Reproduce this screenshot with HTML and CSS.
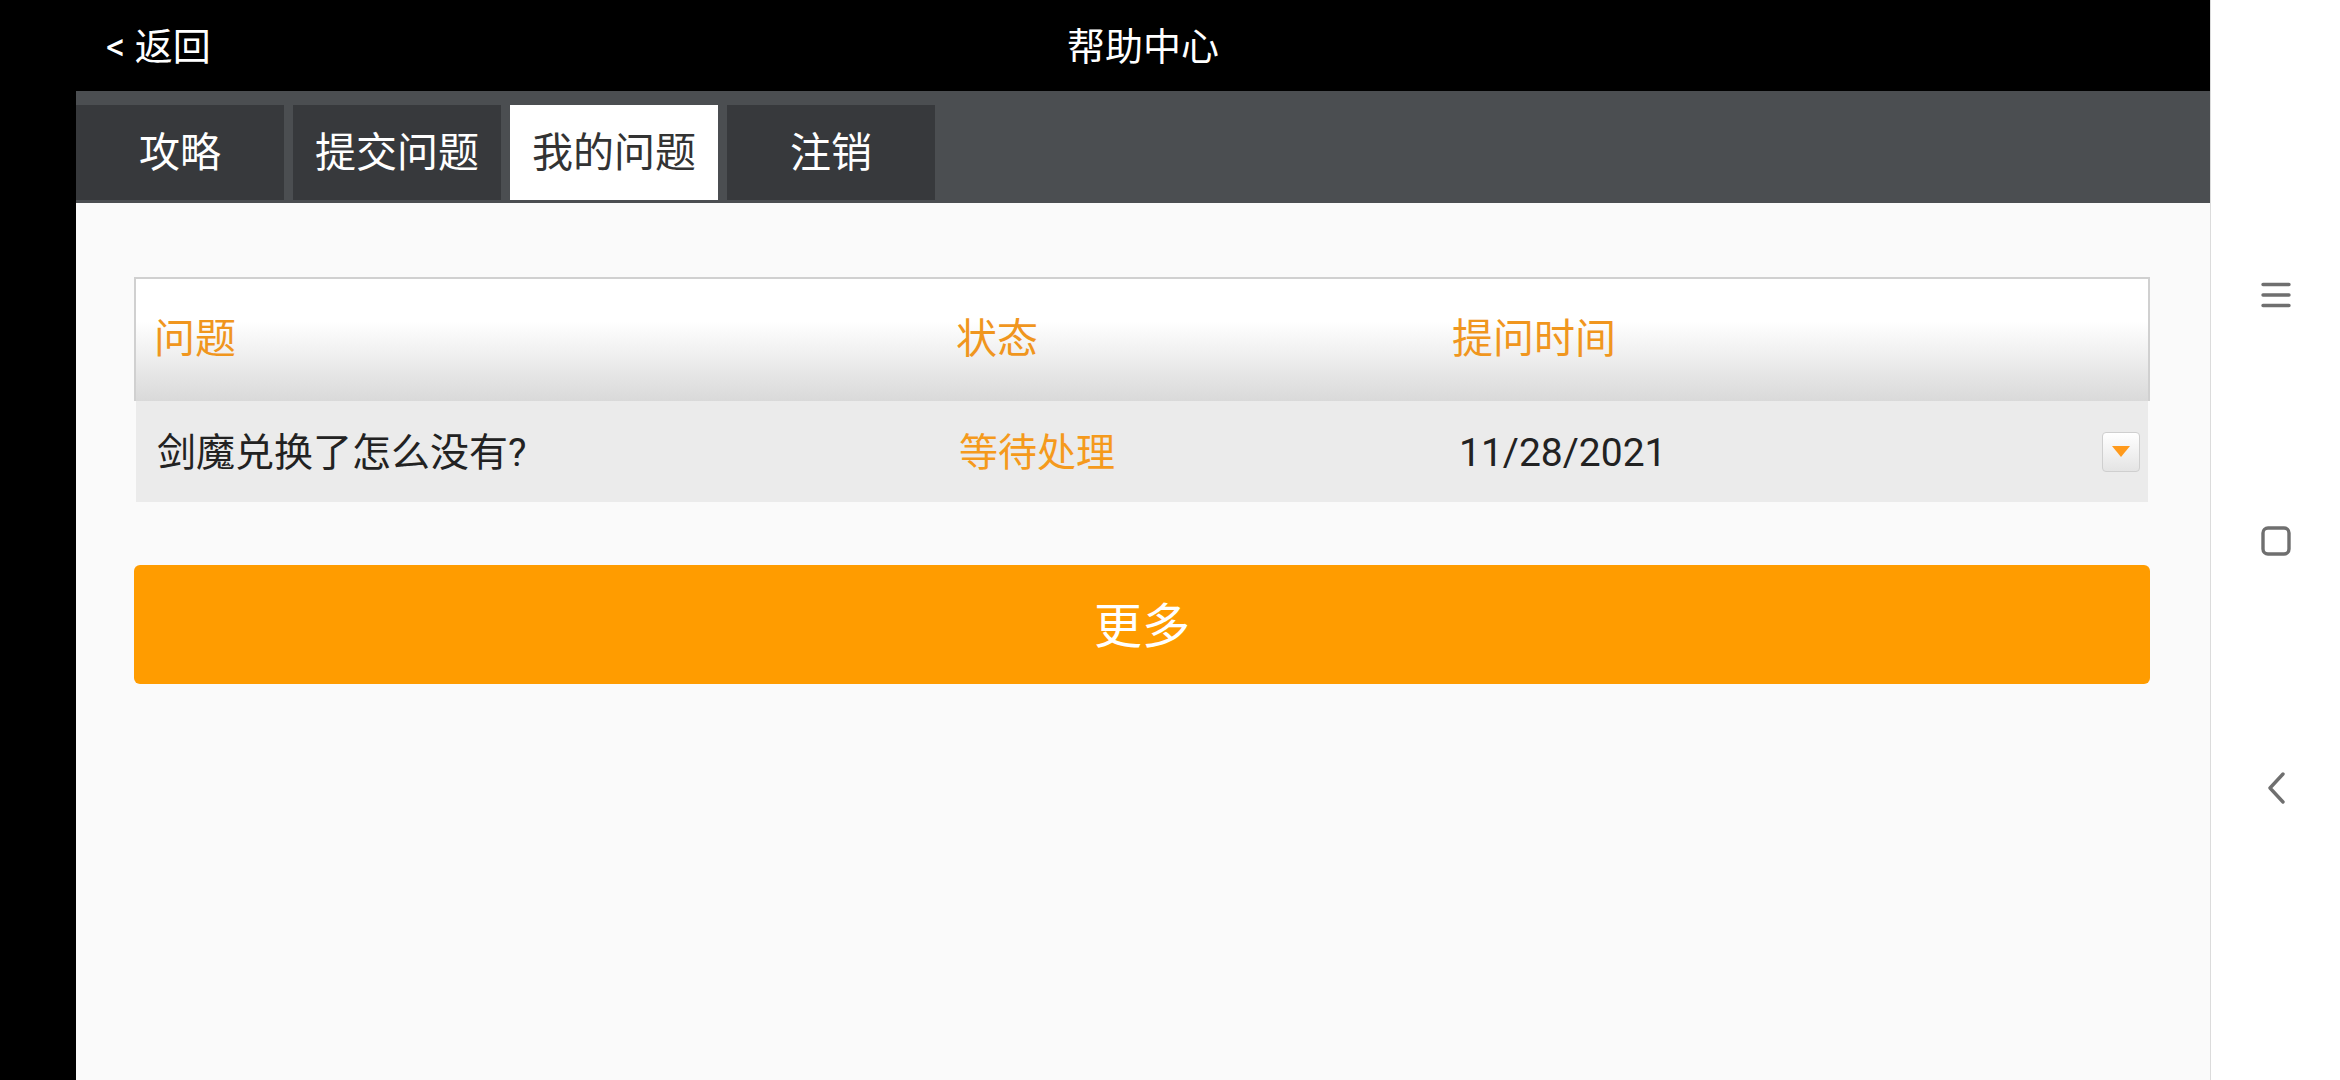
FILE: index.html
```html
<!DOCTYPE html>
<html lang="zh-CN">
<head>
    <meta charset="UTF-8">
    <meta name="viewport" content="width=device-width, initial-scale=1.0">
    <title>帮助中心</title>
    <link rel="stylesheet" href="styles.css">
</head>
<body>
    <div class="edge"></div>

    <div class="app">
        <div class="topbar">
            <div class="back">&lt; 返回</div>
            <div class="title">帮助中心</div>
        </div>

        <div class="tabs">
            <div class="tab">攻略</div>
            <div class="tab">提交问题</div>
            <div class="tab active">我的问题</div>
            <div class="tab">注销</div>
        </div>

        <div class="content">
            <div class="table">
                <div class="table-head">
                    <div class="cell">问题</div>
                    <div class="cell">状态</div>
                    <div class="cell">提问时间</div>
                    <div class="cell"></div>
                </div>
                <div class="table-row">
                    <div class="cell">剑魔兑换了怎么没有?</div>
                    <div class="cell status">等待处理</div>
                    <div class="cell date">11/28/2021</div>
                    <div class="cell">
                        <button class="toggle"><span class="arrow"></span></button>
                    </div>
                </div>
            </div>

            <button class="more">更多</button>
        </div>
    </div>

    <div class="sysnav">
        <svg class="nav-icon" width="30" height="30" viewBox="0 0 30 30">
            <path d="M2 4.5h26M2 15h26M2 25.5h26" stroke="#6f6f6f" stroke-width="3.4" stroke-linecap="round" fill="none"/>
        </svg>
        <svg class="nav-icon" width="30" height="30" viewBox="0 0 30 30">
            <rect x="2" y="2" width="26" height="26" rx="5" stroke="#6f6f6f" stroke-width="3.4" fill="none"/>
        </svg>
        <svg class="nav-icon" width="30" height="32" viewBox="0 0 30 32">
            <path d="M22 2L9 16l13 14" stroke="#6f6f6f" stroke-width="3.4" stroke-linecap="round" stroke-linejoin="round" fill="none"/>
        </svg>
    </div>
</body>
</html>
```

FILE: styles.css
```css
html, body {
    margin: 0;
    padding: 0;
    height: 100%;
}

body {
    display: flex;
    height: 1080px;
    overflow: hidden;
    background-color: #000;
    font-family: Roboto, "Noto Sans CJK SC", sans-serif;
}

.edge {
    width: 76px;
    flex-shrink: 0;
    background-color: #000;
}

.app {
    width: 2134px;
    flex-shrink: 0;
    display: flex;
    flex-direction: column;
    background-color: #fafafa;
}

/* top bar */
.topbar {
    position: relative;
    height: 91px;
    box-sizing: border-box;
    padding-top: 5px;
    background-color: #000;
    color: #fff;
    display: flex;
    align-items: center;
    justify-content: center;
}

.back {
    position: absolute;
    left: 30px;
    top: 5px;
    bottom: 0;
    display: flex;
    align-items: center;
    font-size: 38px;
    line-height: 1.2;
}

.title {
    font-size: 38px;
    line-height: 1.2;
}

/* tabs */
.tabs {
    height: 112px;
    box-sizing: border-box;
    padding: 14px 0 3px 0;
    background-color: #4b4e51;
    display: flex;
    gap: 9px;
}

.tab {
    width: 208px;
    box-sizing: border-box;
    padding-top: 2px;
    background-color: #37393c;
    color: #fff;
    font-size: 41px;
    line-height: 1.2;
    display: flex;
    align-items: center;
    justify-content: center;
}

.tab.active {
    background-color: #fff;
    color: #333;
}

/* content */
.content {
    padding: 74px 60px 0 58px;
}

.table-head, .table-row {
    display: grid;
    grid-template-columns: 802px 496px 1fr 60px;
    align-items: center;
}

.table-head {
    height: 124px;
    box-sizing: border-box;
    border: 2px solid #d0d0d0;
    border-bottom: none;
    background: linear-gradient(to bottom, #fff 0%, #fff 35%, #d9d9d9 100%);
    color: #f0961e;
    font-size: 41px;
    line-height: 1.2;
}

.table-head .cell {
    padding-left: 18px;
}

.table-row {
    height: 101px;
    box-sizing: border-box;
    padding-top: 3px;
    margin: 0 2px;
    background-color: #ebebeb;
    color: #222;
    font-size: 39px;
    line-height: 1.2;
}

.table-row .cell {
    padding-left: 21px;
}

.table-row .status {
    color: #f59a1c;
    font-size: 39px;
}

.table-row .date {
    padding-left: 25px;
    font-size: 39px;
}

.table-row .cell:last-child {
    padding-left: 0;
    display: flex;
    justify-content: flex-end;
    padding-right: 8px;
    margin-top: -3px;
}

.toggle {
    width: 38px;
    height: 40px;
    padding: 0;
    border: 1px solid #cfcfcf;
    border-radius: 4px;
    background: linear-gradient(to bottom, #fff 0%, #e4e4e4 100%);
    display: flex;
    align-items: center;
    justify-content: center;
}

.arrow {
    width: 0;
    height: 0;
    border-left: 9px solid transparent;
    border-right: 9px solid transparent;
    border-top: 11px solid #ff9a1c;
}

.more {
    display: block;
    width: 100%;
    height: 119px;
    margin-top: 63px;
    padding-top: 5px;
    border: none;
    border-radius: 6px;
    background-color: #ff9c00;
    color: #fff;
    font-family: Roboto, "Noto Sans CJK SC", sans-serif;
    font-size: 48px;
    line-height: 1.2;
    cursor: pointer;
}

/* system navigation */
.sysnav {
    width: 130px;
    flex-shrink: 0;
    box-sizing: border-box;
    border-left: 1px solid #dcdcdc;
    background-color: #fff;
    display: flex;
    flex-direction: column;
    align-items: center;
    padding-top: 280px;
    gap: 216px;
}

.nav-icon {
    display: block;
}
```
